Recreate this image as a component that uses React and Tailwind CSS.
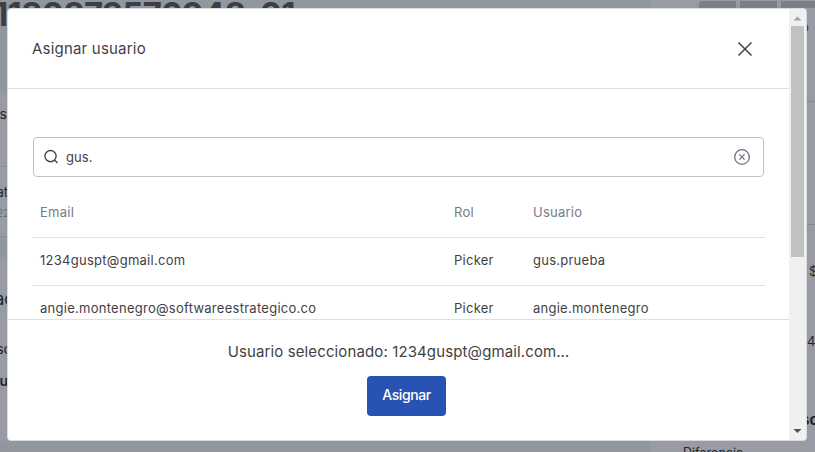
import React from "react";

const rows = [
  { email: "1234guspt@gmail.com", role: "Picker", user: "gus.prueba" },
  { email: "angie.montenegro@softwareestrategico.co", role: "Picker", user: "angie.montenegro" },
];

function Clipped({ className, textClassName = "", children }) {
  return (
    <div className={"flex w-[7px] justify-end overflow-hidden whitespace-nowrap " + className}>
      <span className={textClassName}>{children}</span>
    </div>
  );
}

function PageBehind() {
  return (
    <div className="flex h-full w-full bg-[#92979d] text-[#22252d]">
      <div className="w-[651px] shrink-0 overflow-hidden">
        <div className="h-[92px] overflow-hidden">
          <h1 className="-mt-[6px] -ml-[6px] text-[33px] leading-[40px] font-bold tracking-[-0.75px] whitespace-nowrap text-[#3b3e46]">
            1180873576048-01
          </h1>
        </div>
        <section className="h-[145px] border-b border-[#8a8e95] bg-[#989ba3]">
          <Clipped className="h-[75px] border-b border-[#8a8e95] pt-[11px] text-[14px] leading-[22px]">as</Clipped>
          <Clipped className="pt-[15px] text-[13px] leading-[20px]" textClassName="-mr-[1px]">at</Clipped>
          <Clipped className="text-[11px] leading-[22px] text-[#6b6f78]" textClassName="-mr-[3px]">22</Clipped>
        </section>
        <section className="mt-5 h-[184px] bg-[#989ba3]">
          <Clipped className="pt-[30px] text-[17px] leading-[24px]" textClassName="-mr-[7px]">ac</Clipped>
          <Clipped className="pt-[26px] text-[14px] leading-[24px]" textClassName="-mr-[5px]">so</Clipped>
          <Clipped className="pt-[8px] text-[14px] leading-[24px] font-semibold" textClassName="-mr-[1px]">su</Clipped>
        </section>
      </div>
      <aside className="flex grow flex-col overflow-hidden bg-[#989ba3]">
        <div className="flex h-[102px] shrink-0 flex-col border-b border-[#858990]">
          <div className="ml-12 flex h-[8px] gap-1 pt-px">
            <span className="h-[7px] w-[37px] shrink-0 rounded-tl-[4px] bg-[#7c7f88]" />
            <span className="h-[7px] w-[37px] shrink-0 bg-[#7c7f88]" />
            <span className="h-[7px] w-[37px] shrink-0 bg-[#7c7f88]" />
          </div>
          <span className="mt-[9px] ml-[150px] text-[13px] leading-[20px] text-[#1c2c68]">o</span>
        </div>
        <div className="h-[123px] shrink-0 border-b border-[#858990]" />
        <span className="mt-[36px] ml-[158px] shrink-0 text-[13px] leading-[20px]">$</span>
        <span className="mt-[50px] ml-[156px] shrink-0 text-[13px] leading-[20px]">4</span>
        <span className="mt-[58px] ml-[150px] shrink-0 text-[15px] leading-[22px] font-bold">so</span>
        <span className="mt-[12px] ml-[32px] shrink-0 text-[12.5px] leading-[20px] whitespace-nowrap">Diferencia</span>
      </aside>
    </div>
  );
}

function Scrollbar() {
  return (
    <div className="flex w-[17px] shrink-0 flex-col items-center bg-[#f0f0f0]">
      <svg className="h-[17px] w-[17px] shrink-0" viewBox="0 0 17 17">
        <path d="M4.5 11.5l4-4 4 4z" fill="#a3a3a3" />
      </svg>
      <div className="h-[231px] w-[13px] bg-[#c1c1c1]" />
      <svg className="mt-auto h-[17px] w-[17px] shrink-0" viewBox="0 0 17 17">
        <path d="M4.5 6h8l-4 4z" fill="#505050" />
      </svg>
    </div>
  );
}

function Modal() {
  return (
    <div className="flex h-[433px] w-[800px] overflow-hidden rounded-[4px] border border-[#d9dbe0] bg-white">
      <div className="flex grow flex-col">
        <header className="flex h-20 shrink-0 items-center justify-between border-b border-[#dfe0e3] pr-[36px] pl-[24px]">
          <h2 className="text-[15px] leading-5 tracking-[0.2px]">Asignar usuario</h2>
          <svg className="h-4 w-4" viewBox="0 0 16 16" fill="none" stroke="#3f4550" strokeWidth="1.5">
            <path d="M1.5 1.5l13 13M14.5 1.5l-13 13" />
          </svg>
        </header>
        <div className="h-[230px] overflow-hidden px-6 pt-12">
          <div className="mx-px flex h-10 items-center rounded-[4px] border border-[#bfc1c8] pr-[13px] pl-[10px]">
            <svg className="h-4 w-4" viewBox="0 0 16 16" fill="none" stroke="#3f4550" strokeWidth="1.4">
              <circle cx="6.5" cy="7.1" r="5.6" />
              <path d="M10.5 11.1l3 3" />
            </svg>
            <span className="ml-[6px] grow pt-px text-[13px] tracking-[0.1px]">gus.</span>
            <svg className="h-4 w-4" viewBox="0 0 16 16" fill="none" stroke="#6c7283" strokeWidth="1.3">
              <circle cx="8" cy="8" r="7.3" />
              <path d="M5.4 5.4l5.2 5.2M10.6 5.4l-5.2 5.2" />
            </svg>
          </div>
          <div className="mt-[12px] text-[13px]">
            <div className="grid h-[49px] grid-cols-[414px_79px_1fr] items-center border-b border-[#dfe0e3] pl-2 tracking-[0.25px] text-[#747b87]">
              <span>Email</span>
              <span>Rol</span>
              <span>Usuario</span>
            </div>
            {rows.map((r) => (
              <div key={r.email} className="grid h-12 grid-cols-[414px_79px_1fr] items-center border-b border-[#dfe0e3] pb-[2px] pl-2">
                <span className="tracking-[0.27px]">{r.email}</span>
                <span className="tracking-[0.25px]">{r.role}</span>
                <span className="tracking-[0.25px]">{r.user}</span>
              </div>
            ))}
          </div>
        </div>
        <footer className="flex grow flex-col items-center border-t border-[#dfe0e3] bg-white pt-[22px]">
          <p className="text-[15px] leading-5 tracking-[0.12px]">Usuario seleccionado: 1234guspt@gmail.com…</p>
          <button className="mt-[14px] ml-4 h-10 w-[79px] rounded-[4px] bg-[#2953b2] pb-[3px] text-[14px] font-medium tracking-[-0.4px] text-white">Asignar</button>
        </footer>
      </div>
      <Scrollbar />
    </div>
  );
}

export default function App() {
  return (
    <div className="relative h-[452px] w-[815px] overflow-hidden font-['Inter','Noto_Sans',sans-serif] text-[#3f3f46]">
      <PageBehind />
      <div className="absolute top-2 left-[7px]">
        <Modal />
      </div>
    </div>
  );
}
